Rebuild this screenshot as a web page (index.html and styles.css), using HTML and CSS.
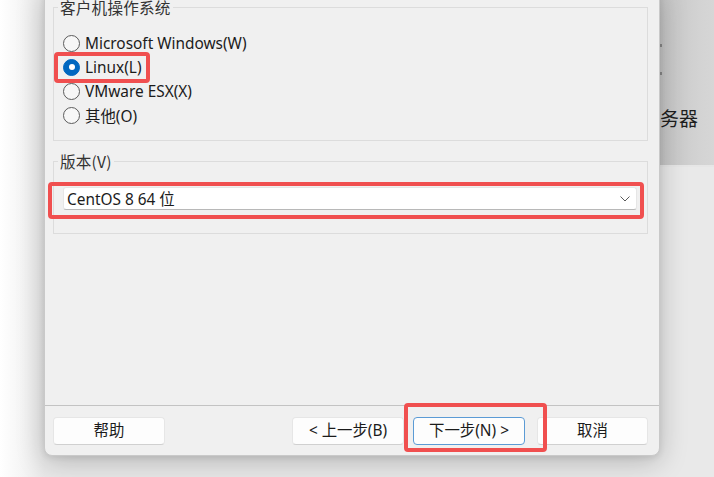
FILE: index.html
```html
<!DOCTYPE html>
<html lang="zh-CN">
<head>
<meta charset="utf-8">
<title>新建虚拟机向导</title>
<link rel="stylesheet" href="styles.css">
</head>
<body>
<div class="desktop">
  <div class="behind">
    <i class="mark mark-a"></i>
    <i class="mark mark-b"></i>
    <span class="behind-text">服务器</span>
  </div>

  <div class="dialog">
    <div class="content">
      <fieldset class="group group-os">
        <legend>客户机操作系统</legend>
        <label class="radio"><span class="dot"></span><span>Microsoft Windows(W)</span></label>
        <label class="radio checked"><span class="dot"></span><span>Linux(L)</span></label>
        <label class="radio"><span class="dot"></span><span>VMware ESX(X)</span></label>
        <label class="radio"><span class="dot"></span><span>其他(O)</span></label>
      </fieldset>
      <fieldset class="group group-ver">
        <legend>版本(V)</legend>
        <div class="combo">
          <span class="combo-text">CentOS 8 64 位</span>
          <svg class="chev" width="10" height="6" viewBox="0 0 10 6"><polyline points="0.5,0.5 5,5 9.5,0.5" fill="none" stroke="#5a5a5a" stroke-width="1"/></svg>
        </div>
      </fieldset>
    </div>
    <div class="footer">
      <button class="btn">帮助</button>
      <div class="nav">
        <button class="btn">&lt; 上一步(B)</button>
        <button class="btn primary">下一步(N) &gt;</button>
        <button class="btn cancel">取消</button>
      </div>
    </div>

    <div class="mark-box box-linux"></div>
    <div class="mark-box box-combo"></div>
    <div class="mark-box box-next"></div>
  </div>
</div>
</body>
</html>
```

FILE: styles.css
```css
* { box-sizing: border-box; }

html, body {
  margin: 0;
  padding: 0;
  background: #ffffff;
}

body {
  font-family: "Noto Sans", "Noto Sans CJK SC", sans-serif;
  font-size: 15.4px;
  color: #1b1b1b;
}

.desktop {
  position: relative;
  width: 714px;
  height: 477px;
  overflow: hidden;
  background: linear-gradient(90deg, #ffffff 0px, #f6f6f6 20px, #e9e9e9 44px);
}

.behind {
  position: absolute;
  left: 600px;
  top: 0;
  width: 114px;
  height: 167px;
  background: linear-gradient(90deg, #bdbdbd 0px, #c6c6c6 62px, #d3d3d3 100px, #d6d6d6 114px);
  border-bottom: 2px solid #e6e6e6;
}

.behind-text {
  position: absolute;
  right: 16px;
  top: 105px;
  font-family: "Noto Sans CJK SC", sans-serif;
  font-size: 19px;
  line-height: 26px;
  color: #1e1e1e;
}

.mark {
  position: absolute;
  left: 60px;
  width: 2px;
  height: 3px;
  background: #8a8a8a;
}
.mark-a { top: 44px; }
.mark-b { top: 72px; }

.dialog {
  position: absolute;
  left: 44px;
  top: -12px;
  width: 616px;
  height: 468px;
  background: #f0f0f0;
  border: 1px solid #c9c9c9;
  border-radius: 0 0 8px 8px;
  box-shadow: 0 6px 28px rgba(0, 0, 0, 0.22), 0 2px 6px rgba(0, 0, 0, 0.08);
  display: flex;
  flex-direction: column;
}

.content {
  flex: 1;
  padding: 8px 11px 0 8px;
}

.group {
  margin: 0;
  border: 1px solid #dcdcdc;
  border-radius: 0;
  min-width: 0;
}

.group legend {
  margin-left: -5px;
  padding: 0 2px;
  line-height: 20px;
  font-family: "Noto Sans CJK SC", "Noto Sans", sans-serif;
  color: #333;
  font-size: 15.6px;
  letter-spacing: 0.2px;
}

.group-os {
  padding: 14px 9px 13px 9px;
}

.group-ver {
  margin-top: 10px;
  padding: 16px 10px 23px 9px;
}

.radio {
  display: flex;
  align-items: center;
  height: 24px;
  gap: 5px;
  color: #1b1b1b;
}

.radio .dot {
  width: 17px;
  height: 17px;
  border-radius: 50%;
  border: 1px solid #5c5c5c;
  background: #f7f7f7;
  flex: none;
  position: relative;
}

.radio.checked .dot {
  border-color: #0067c0;
  background: #0067c0;
}

.radio.checked .dot::after {
  content: "";
  position: absolute;
  left: 4.5px;
  top: 4.5px;
  width: 6px;
  height: 6px;
  border-radius: 50%;
  background: #ffffff;
}

.combo {
  height: 23px;
  background: #ffffff;
  border: 1px solid #e6e6e6;
  border-bottom-color: #b8b8b8;
  border-radius: 3px;
  display: flex;
  align-items: center;
  justify-content: space-between;
  padding: 0 6px 0 3px;
}

.combo-text {
  color: #1b1b1b;
}

.chev {
  display: block;
}

.footer {
  flex: none;
  height: 50px;
  border-top: 1px solid #c3c3c3;
  padding: 11px 11px 0 8px;
  display: flex;
  justify-content: space-between;
  align-items: flex-start;
}

.nav {
  display: flex;
  gap: 9px;
}

.btn {
  width: 112px;
  height: 28px;
  background: #fdfdfd;
  border: 1px solid #e6e6e6;
  border-bottom-color: #d0d0d0;
  border-radius: 4px;
  font-family: "Noto Sans", "Noto Sans CJK SC", sans-serif;
  font-size: 15.4px;
  color: #1b1b1b;
  padding: 0;
  line-height: 26px;
}

.btn.primary {
  border: 1px solid #5b9bd5;
}

.btn.cancel {
  margin-left: 3px;
  width: 111px;
}

.mark-box {
  position: absolute;
  border: 4px solid #f04f4f;
  border-radius: 4px;
  pointer-events: none;
}

.box-linux { left: 9px; top: 63px; width: 96px; height: 31px; }
.box-combo { left: 3px; top: 193px; width: 596px; height: 37px; }
.box-next  { left: 359px; top: 414px; width: 143px; height: 49px; }
```
